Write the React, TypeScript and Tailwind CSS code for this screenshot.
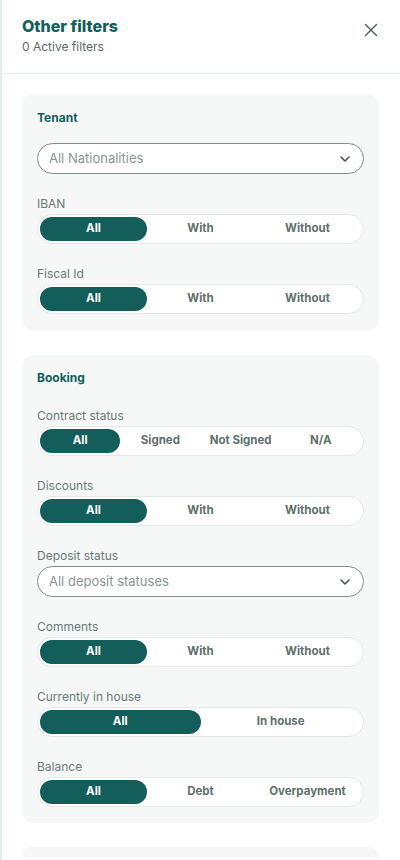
import React from "react";

const font = { fontFamily: "Inter, 'Noto Sans', sans-serif" };

function Chevron() {
  return (
    <svg width="16" height="16" viewBox="0 0 24 24" fill="none" stroke="#3f5553" strokeWidth="2.4" strokeLinecap="round" strokeLinejoin="round">
      <path d="M6 9l6 6 6-6" />
    </svg>
  );
}

function Select({ placeholder }: { placeholder: string }) {
  return (
    <div className="flex h-[31px] items-center justify-between rounded-full border border-[#7d8f8d] bg-white pl-[11px] pr-[10px]">
      <span className="text-[13px] text-[#8a9594]">{placeholder}</span>
      <Chevron />
    </div>
  );
}

function Segment({ options, cols }: { options: string[]; cols: string }) {
  return (
    <div className={`grid ${cols} h-[30px] items-center rounded-full border border-[#e3e8e8] bg-white p-[2px]`}>
      {options.map((o, i) => (
        <div
          key={o}
          className={
            i === 0
              ? "flex h-[24px] items-center justify-center rounded-full bg-[#135e5a] text-[11.5px] font-bold text-white"
              : "flex h-[24px] items-center justify-center text-[11.5px] font-bold text-[#5f6f6d]"
          }
        >
          {o}
        </div>
      ))}
    </div>
  );
}

function Field({ label, children }: { label: string; children: React.ReactNode }) {
  return (
    <div className="mt-[22px] flex flex-col gap-[2px]">
      <div className="h-[16px] text-[12px] leading-[16px] text-[#6b7876]">{label}</div>
      {children}
    </div>
  );
}

export default function App() {
  return (
    <div className="h-[860px] w-[400px] overflow-hidden border-l-2 border-[#e3ebec] bg-white" style={font}>
      <div className="flex items-start justify-between border-b border-[#e3ebec] pb-[18px] pl-[20px] pr-[22px] pt-[15px]">
        <div>
          <div className="text-[16px] font-extrabold leading-[22px] text-[#135e5a]">Other filters</div>
          <div className="mt-[2px] text-[12px] leading-[16px] text-[#5d6967]">0 Active filters</div>
        </div>
        <svg className="mt-[8px]" width="14" height="14" viewBox="0 0 14 14" fill="none" stroke="#4a5a58" strokeWidth="1.4" strokeLinecap="round">
          <path d="M1.5 1.5l11 11M12.5 1.5l-11 11" />
        </svg>
      </div>

      <div className="flex flex-col gap-[24px] pl-[20px] pr-[21px] pt-[20px]">
        <div className="rounded-[12px] bg-[#f6f8f8] px-[15px] pb-[17px] pt-[16px]">
          <div className="text-[12px] font-bold leading-[16px] text-[#135e5a]">Tenant</div>
          <div className="mt-[17px]">
            <Select placeholder="All Nationalities" />
          </div>
          <Field label="IBAN">
            <Segment cols="grid-cols-3" options={["All", "With", "Without"]} />
          </Field>
          <Field label="Fiscal Id">
            <Segment cols="grid-cols-3" options={["All", "With", "Without"]} />
          </Field>
        </div>

        <div className="rounded-[12px] bg-[#f6f8f8] px-[15px] pb-[16px] pt-[15px]">
          <div className="text-[12px] font-bold leading-[16px] text-[#135e5a]">Booking</div>
          <Field label="Contract status">
            <Segment cols="grid-cols-4" options={["All", "Signed", "Not Signed", "N/A"]} />
          </Field>
          <Field label="Discounts">
            <Segment cols="grid-cols-3" options={["All", "With", "Without"]} />
          </Field>
          <Field label="Deposit status">
            <Select placeholder="All deposit statuses" />
          </Field>
          <Field label="Comments">
            <Segment cols="grid-cols-3" options={["All", "With", "Without"]} />
          </Field>
          <Field label="Currently in house">
            <Segment cols="grid-cols-2" options={["All", "In house"]} />
          </Field>
          <Field label="Balance">
            <Segment cols="grid-cols-3" options={["All", "Debt", "Overpayment"]} />
          </Field>
        </div>

        <div className="h-[10px] rounded-t-[12px] bg-[#f6f8f8]" />
      </div>
    </div>
  );
}
